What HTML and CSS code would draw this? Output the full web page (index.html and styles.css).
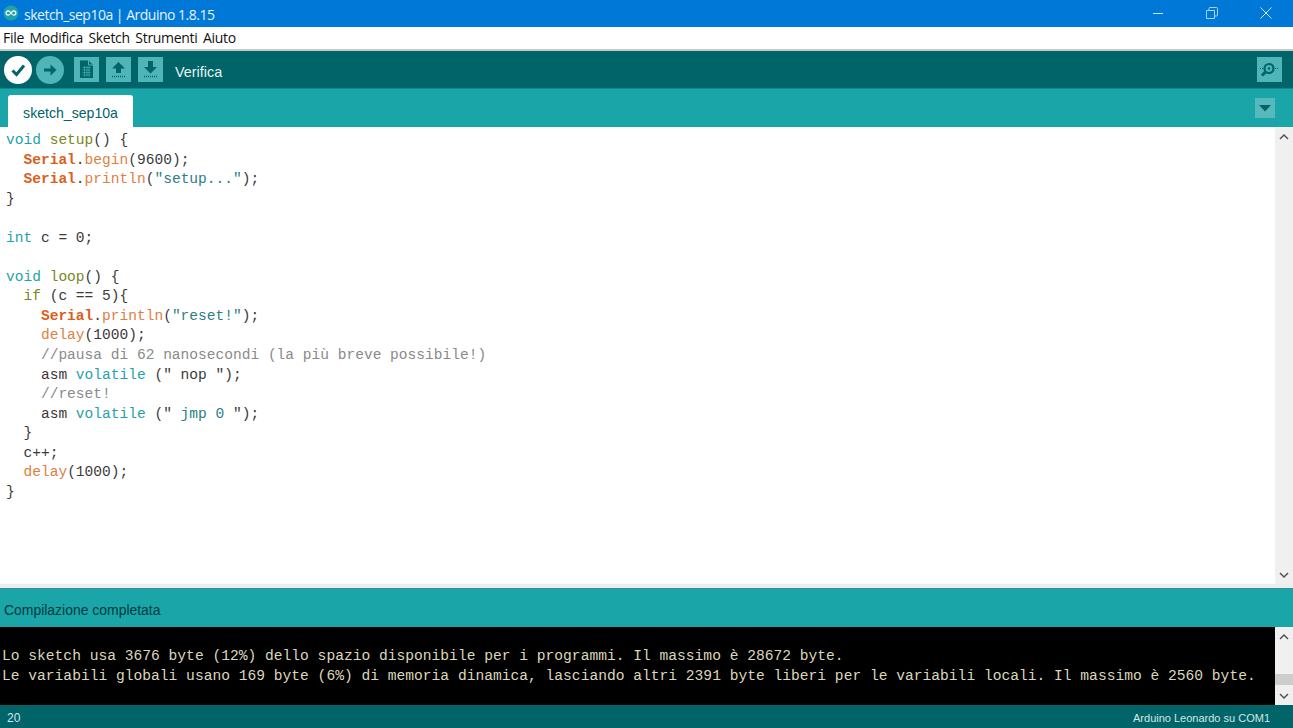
FILE: index.html
```html
<!DOCTYPE html>
<html lang="it">
<head>
<meta charset="utf-8">
<title>sketch_sep10a | Arduino 1.8.15</title>
<link rel="stylesheet" href="styles.css">
</head>
<body>
<div class="app">
  <header class="titlebar">
    <svg class="logo" width="16" height="16" viewBox="0 0 16 16"><circle cx="8" cy="8" r="7.5" fill="#1fa3a8"/><path d="M5.2 5.9a2.1 2.1 0 1 0 0 4.2c1.2 0 2-1 2.8-2.1.8-1.1 1.600-2.100 2.800-2.100a2.100 2.100 0 1 1 0 4.200c-1.200 0-2-1-2.800-2.100-.8-1.100-1.600-2.100-2.800-2.100z" fill="none" stroke="#fff" stroke-width="1.200"/></svg>
    <span class="title">sketch_sep10a | Arduino 1.8.15</span>
    <div class="winbtns">
      <span class="winbtn"><svg width="12" height="12" viewBox="0 0 12 12"><path d="M1 6.500h10" stroke="#cfe6f8" stroke-width="1"/></svg></span>
      <span class="winbtn"><svg width="12" height="12" viewBox="0 0 12 12"><path d="M.5 3.500h8v8h-8zM3 3.500V1.500a1 1 0 0 1 1-1h6.500a1 1 0 0 1 1 1V8a1 1 0 0 1-1 1H8.500" fill="none" stroke="#a9d4f5" stroke-width="1"/></svg></span>
      <span class="winbtn"><svg width="12" height="12" viewBox="0 0 12 12"><path d="M.5.500l11 11M11.500.500l-11 11" stroke="#d5e9f9" stroke-width="1"/></svg></span>
    </div>
  </header>
  <nav class="menubar">
    <span>File</span><span>Modifica</span><span>Sketch</span><span>Strumenti</span><span>Aiuto</span>
  </nav>
  <div class="toolbar">
    <span class="round active"><svg width="28" height="28" viewBox="0 0 28 28"><path d="M8.500 14.500l4 4 7.500-9" fill="none" stroke="#006468" stroke-width="3"/></svg></span>
    <span class="round"><svg width="28" height="28" viewBox="0 0 28 28"><path d="M8 12.500h6.500V8.500L20.500 14l-6 5.500v-4H8z" fill="#006468"/></svg></span>
    <span class="square first"><svg width="25" height="25" viewBox="0 0 25 25"><path d="M6 3.500h8.500l4.500 4.500v13H6z" fill="#006468"/><path d="M14.500 3.500V8H19" fill="none" stroke="#4fb5b9" stroke-width="1"/><path d="M8.500 10.500h8M8.500 13h8M8.500 15.500h8M8.500 18h8M10.500 9v10.500M13 9v10.500M15 9v10.500" stroke="#4fb5b9" stroke-width=".6"/></svg></span>
    <span class="square"><svg width="25" height="25" viewBox="0 0 25 25"><path d="M12.500 5l6.500 6.500h-4V16h-5v-4.500H6z" fill="#006468"/><path d="M6 19.500h13" stroke="#006468" stroke-width="1.500" stroke-dasharray="1 1"/></svg></span>
    <span class="square"><svg width="25" height="25" viewBox="0 0 25 25"><path d="M10 4h5v6h4l-6.500 6.500L6 10h4z" fill="#006468"/><path d="M6 19.500h13" stroke="#006468" stroke-width="1.500" stroke-dasharray="1 1"/></svg></span>
    <span class="hint">Verifica</span>
    <span class="square monitor"><svg width="25" height="25" viewBox="0 0 25 25"><circle cx="12" cy="11.500" r="4.500" fill="none" stroke="#006468" stroke-width="2.200"/><circle cx="12" cy="11.500" r="1.300" fill="#006468"/><path d="M8.500 15l-3.500 3.500" stroke="#006468" stroke-width="3"/><path d="M3 11.500h3M18 11.500h4" stroke="#006468" stroke-width="1" stroke-dasharray="1 1"/></svg></span>
  </div>
  <div class="tabbar">
    <span class="tab">sketch_sep10a</span>
    <span class="tabmenu"><svg width="12" height="7" viewBox="0 0 12 7"><path d="M0 0h12L6 6.500z" fill="#006468"/></svg></span>
  </div>
  <main class="editor">
    <pre class="code"><span class="kw">void</span> <span class="fn">setup</span>() {
  <b class="cl">Serial</b>.<span class="me">begin</span>(9600);
  <b class="cl">Serial</b>.<span class="me">println</span>(<span class="st">"setup..."</span>);
}

<span class="kw">int</span> c = 0;

<span class="kw">void</span> <span class="fn">loop</span>() {
  <span class="fn">if</span> (c == 5){
    <b class="cl">Serial</b>.<span class="me">println</span>(<span class="st">"reset!"</span>);
    <span class="me">delay</span>(1000);
    <span class="cm">//pausa di 62 nanosecondi (la più breve possibile!)</span>
    asm <span class="kw">volatile</span> (" nop ");
    <span class="cm">//reset!</span>
    asm <span class="kw">volatile</span> (" <span class="st">jmp 0</span> ");
  }
  c++;
  <span class="me">delay</span>(1000);
}</pre>
    <div class="scroll light">
      <svg class="arrow" width="10" height="6" viewBox="0 0 10 6"><path d="M1 5l4-4 4 4" fill="none" stroke="#555" stroke-width="1.500"/></svg>
      <svg class="arrow" width="10" height="6" viewBox="0 0 10 6"><path d="M1 1l4 4 4-4" fill="none" stroke="#555" stroke-width="1.500"/></svg>
    </div>
  </main>
  <div class="splitter"></div>
  <div class="status">Compilazione completata</div>
  <section class="console">
    <pre class="output">Lo sketch usa 3676 byte (12%) dello spazio disponibile per i programmi. Il massimo è 28672 byte.
Le variabili globali usano 169 byte (6%) di memoria dinamica, lasciando altri 2391 byte liberi per le variabili locali. Il massimo è 2560 byte.</pre>
    <div class="scroll">
      <svg class="arrow" width="10" height="6" viewBox="0 0 10 6"><path d="M1 5l4-4 4 4" fill="none" stroke="#555" stroke-width="1.500"/></svg>
      <span class="thumb"></span>
      <svg class="arrow" width="10" height="6" viewBox="0 0 10 6"><path d="M1 1l4 4 4-4" fill="none" stroke="#555" stroke-width="1.500"/></svg>
    </div>
  </section>
  <footer class="footer"><span class="line">20</span><span>Arduino Leonardo su COM1</span></footer>
</div>
</body>
</html>
```
FILE: styles.css
```css
* { box-sizing: border-box; }
html, body { margin: 0; height: 100%; overflow: hidden; }
body { font-family: "Liberation Sans", Arial, sans-serif; background: #fff; }
pre { margin: 0; font-family: "Liberation Mono", "Courier New", monospace; font-size: 14.55px; line-height: 19.55px; }
.app { display: flex; flex-direction: column; height: 728px; }

.titlebar { height: 27px; flex: none; background: #0078d7; color: #e8f3fc; display: flex; align-items: center; padding-left: 3px; font-family: "Open Sans", sans-serif; font-size: 14px; letter-spacing: -0.5px; }
.logo { flex: none; margin-top: -2px; }
.title { margin-left: 5px; margin-top: 1px; }
.winbtns { margin-left: auto; display: flex; height: 100%; }
.winbtn { width: 54px; display: flex; align-items: center; justify-content: center; margin-top: -1px; }

.menubar { height: 24px; flex: none; background: #fff; border-bottom: 2px solid #c8c8c8; display: flex; gap: 5.5px; align-items: center; padding: 0 3px 1px; font-family: "Open Sans", sans-serif; font-size: 14px; letter-spacing: -0.3px; color: #111; }

.toolbar { height: 37px; flex: none; background: #006468; display: flex; align-items: center; padding: 0 11px 0 4px; }
.round { width: 28px; height: 28px; border-radius: 50%; background: #4fb5b9; margin-right: 4px; display: block; }
.round.active { background: #fff; }
.round svg, .square svg { display: block; }
.square { width: 25px; height: 25px; background: #4fb5b9; margin-right: 7px; display: block; }
.square.first { margin-left: 6px; }
.hint { color: #e6f2f2; font-size: 14.4px; margin-left: 5px; padding-top: 4px; }
.monitor { margin: 0 0 0 auto; }

.tabbar { height: 39px; flex: none; background: #1aa5a9; border-top: 1px solid #0e8a8f; display: flex; align-items: flex-end; padding-left: 8px; position: relative; }
.tab { width: 125px; height: 32px; background: #fff; border-radius: 3px 3px 0 0; color: #006468; font-size: 14.1px; display: flex; align-items: center; justify-content: center; padding-top: 3px; }
.tabmenu { position: absolute; right: 18px; top: 9px; width: 20px; height: 20px; background: #56b9bd; display: flex; align-items: center; justify-content: center; }

.editor { height: 457px; flex: none; background: #fff; display: flex; }
.code { flex: 1; padding: 4px 0 0 6px; color: #3a3a3a; }
.kw { color: #1fa3a8; }
.fn { color: #7a8722; }
.cl { color: #d9601a; font-weight: bold; }
.me { color: #e0803f; }
.st { color: #2a7f83; }
.cm { color: #8a8a8a; }

.scroll { width: 18px; flex: none; background: #f0f0f0; display: flex; flex-direction: column; justify-content: space-between; align-items: center; padding: 7px 0 6px; position: relative; }
.arrow { display: block; }
.thumb { position: absolute; left: 0; right: 0; top: 47px; height: 11px; background: #cdcdcd; }

.splitter { height: 4px; flex: none; background: #eeeeee; }
.status { height: 39px; flex: none; background: #1aa5a9; color: #003c3e; font-size: 13.95px; display: flex; align-items: center; padding: 3px 0 0 4px; border-top: 1px solid #3c8f92; }

.console { height: 78px; flex: none; background: #000; display: flex; }
.output { flex: 1; padding: 20px 0 0 2px; color: #dcd6bd; overflow: hidden; white-space: pre; font-size: 14.61px; }

.footer { flex: 1; background: #006468; color: #d4e6e6; font-size: 11px; display: flex; justify-content: space-between; align-items: center; padding: 3px 23px 0 7px; }
.line { font-size: 12px; }
```
